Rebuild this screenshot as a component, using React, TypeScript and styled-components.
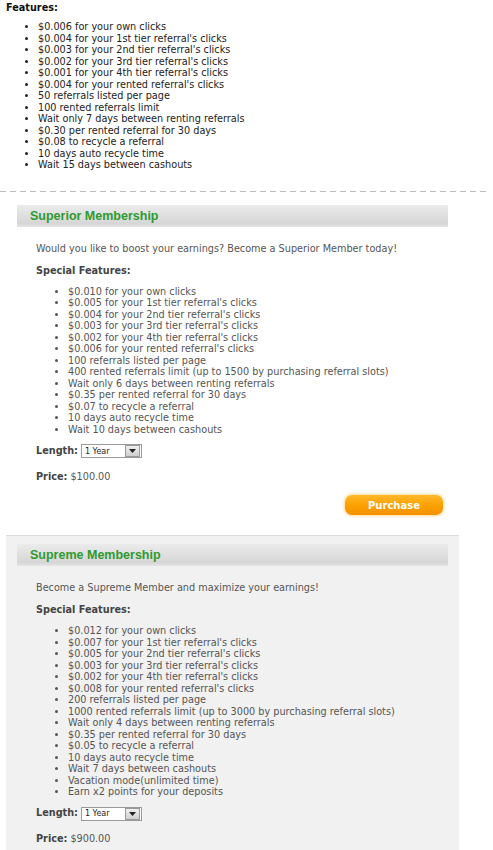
import React from "react";
import styled, { createGlobalStyle } from "styled-components";

const Global = createGlobalStyle`
  html, body { margin: 0; padding: 0; background: #ffffff; }
  body { font-family: "DejaVu Sans", Verdana, sans-serif; font-size: 9.7px; color: #555; }
`;

const Page = styled.div`
  width: 493px;
  overflow: hidden;
`;

const TopBlock = styled.div`
  padding-left: 6px;
  color: #222;
`;

const TopTitle = styled.div`
  font-weight: bold;
  line-height: 16px;
  color: #111;
`;

const List = styled.ul<{ $indent: number }>`
  margin: 0;
  padding-left: ${(p) => p.$indent}px;
  list-style: disc;
  line-height: 11.5px;
`;

const TopList = styled(List)`
  margin-top: 5px;
`;

const Divider = styled.div`
  margin-top: 20px;
  height: 1px;
  width: 487px;
  background: repeating-linear-gradient(90deg, #bdbdbd 0 6px, transparent 6px 10px);
`;

const Section = styled.section`
  margin: 13px 0 0 17px;
  width: 431px;
`;

const PanelWrap = styled.section`
  margin: 20px 0 0 6px;
  width: 431px;
  padding: 8px 11px 20px 11px;
  background: #f1f1f1;
  border-top: 1px solid #dcdcdc;
`;

const Header = styled.div`
  height: 22px;
  display: flex;
  align-items: center;
  padding-left: 13px;
  background: linear-gradient(#ebebeb, #dadada 70%, #d6d6d6 85%, #e6e6e6);
`;

const HeaderTitle = styled.h2`
  margin: 0;
  font-size: 12.5px;
  font-weight: bold;
  color: #2f9a2f;
  font-family: "Liberation Sans", Arial, sans-serif;
`;

const Body = styled.div`
  padding-left: 19px;
`;

const Desc = styled.p`
  margin: 16px 0 0;
  line-height: 12px;
`;

const Label = styled.div`
  margin-top: 10px;
  line-height: 12px;
  font-weight: bold;
  color: #444;
`;

const FeatureList = styled(List)`
  margin-top: 9px;
`;

const Row = styled.div<{ $mt: number }>`
  margin-top: ${(p) => p.$mt}px;
  display: flex;
  align-items: center;
  gap: 3px;
  height: 14px;
`;

const Bold = styled.span`
  font-weight: bold;
  color: #444;
`;

const SelectBox = styled.div`
  width: 56px;
  height: 12px;
  border: 1px solid #9a9a9a;
  background: #fff;
  display: flex;
  align-items: center;
  justify-content: space-between;
  font-size: 8px;
  color: #222;
  padding-left: 3px;
  box-sizing: content-box;
  margin-top: 2px;
`;

const Arrow = styled.div`
  width: 13px;
  height: 10px;
  margin-right: 1px;
  background: linear-gradient(#f0f0f0, #cfcfcf);
  border: 1px solid #9a9a9a;
  box-sizing: content-box;
  display: flex;
  align-items: center;
  justify-content: center;
`;

const ButtonRow = styled.div`
  display: flex;
  justify-content: flex-end;
  margin-top: 12px;
  padding-right: 5px;
`;

const PurchaseBtn = styled.button`
  width: 98px;
  height: 20px;
  border: none;
  border-radius: 7px;
  background: linear-gradient(#ffb82a, #fba000 55%, #f59000);
  box-shadow: 0 0 3px 1px rgba(255, 190, 80, 0.6);
  color: #fff;
  font-family: "DejaVu Sans", sans-serif;
  font-weight: bold;
  font-size: 10px;
  padding: 0;
`;

const Select = () => (
  <SelectBox>
    <span>1 Year</span>
    <Arrow>
      <svg width="7" height="4" viewBox="0 0 7 4">
        <path d="M0 0 L7 0 L3.5 4 Z" fill="#222" />
      </svg>
    </Arrow>
  </SelectBox>
);

const basic = [
  "$0.006 for your own clicks",
  "$0.004 for your 1st tier referral's clicks",
  "$0.003 for your 2nd tier referral's clicks",
  "$0.002 for your 3rd tier referral's clicks",
  "$0.001 for your 4th tier referral's clicks",
  "$0.004 for your rented referral's clicks",
  "50 referrals listed per page",
  "100 rented referrals limit",
  "Wait only 7 days between renting referrals",
  "$0.30 per rented referral for 30 days",
  "$0.08 to recycle a referral",
  "10 days auto recycle time",
  "Wait 15 days between cashouts",
];

const superior = [
  "$0.010 for your own clicks",
  "$0.005 for your 1st tier referral's clicks",
  "$0.004 for your 2nd tier referral's clicks",
  "$0.003 for your 3rd tier referral's clicks",
  "$0.002 for your 4th tier referral's clicks",
  "$0.006 for your rented referral's clicks",
  "100 referrals listed per page",
  "400 rented referrals limit (up to 1500 by purchasing referral slots)",
  "Wait only 6 days between renting referrals",
  "$0.35 per rented referral for 30 days",
  "$0.07 to recycle a referral",
  "10 days auto recycle time",
  "Wait 10 days between cashouts",
];

const supreme = [
  "$0.012 for your own clicks",
  "$0.007 for your 1st tier referral's clicks",
  "$0.005 for your 2nd tier referral's clicks",
  "$0.003 for your 3rd tier referral's clicks",
  "$0.002 for your 4th tier referral's clicks",
  "$0.008 for your rented referral's clicks",
  "200 referrals listed per page",
  "1000 rented referrals limit (up to 3000 by purchasing referral slots)",
  "Wait only 4 days between renting referrals",
  "$0.35 per rented referral for 30 days",
  "$0.05 to recycle a referral",
  "10 days auto recycle time",
  "Wait 7 days between cashouts",
  "Vacation mode(unlimited time)",
  "Earn x2 points for your deposits",
];

const MembershipBody = ({ desc, items, price }: { desc: string; items: string[]; price: string }) => (
  <Body>
    <Desc>{desc}</Desc>
    <Label>Special Features:</Label>
    <FeatureList $indent={32}>
      {items.map((t) => (
        <li key={t}>{t}</li>
      ))}
    </FeatureList>
    <Row $mt={8}>
      <Bold>Length:</Bold>
      <Select />
    </Row>
    <Row $mt={12}>
      <Bold>Price:</Bold>
      <span>{price}</span>
    </Row>
  </Body>
);

export default function App() {
  return (
    <Page>
      <Global />
      <TopBlock>
        <TopTitle>Features:</TopTitle>
        <TopList $indent={32}>
          {basic.map((t) => (
            <li key={t}>{t}</li>
          ))}
        </TopList>
      </TopBlock>
      <Divider />
      <Section>
        <Header>
          <HeaderTitle>Superior Membership</HeaderTitle>
        </Header>
        <MembershipBody
          desc="Would you like to boost your earnings? Become a Superior Member today!"
          items={superior}
          price="$100.00"
        />
        <ButtonRow>
          <PurchaseBtn>Purchase</PurchaseBtn>
        </ButtonRow>
      </Section>
      <PanelWrap>
        <Header>
          <HeaderTitle>Supreme Membership</HeaderTitle>
        </Header>
        <MembershipBody
          desc="Become a Supreme Member and maximize your earnings!"
          items={supreme}
          price="$900.00"
        />
      </PanelWrap>
    </Page>
  );
}
